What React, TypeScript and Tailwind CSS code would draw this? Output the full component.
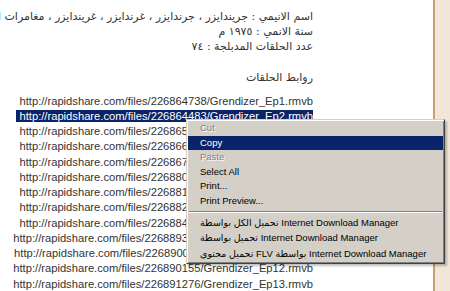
import React from 'react';

const links = [
  'http://rapidshare.com/files/226864738/Grendizer_Ep1.rmvb',
  'http://rapidshare.com/files/226864483/Grendizer_Ep2.rmvb',
  'http://rapidshare.com/files/226865120/Grendizer_Ep3.rmvb',
  'http://rapidshare.com/files/226866401/Grendizer_Ep4.rmvb',
  'http://rapidshare.com/files/226867733/Grendizer_Ep5.rmvb',
  'http://rapidshare.com/files/226880214/Grendizer_Ep6.rmvb',
  'http://rapidshare.com/files/226881502/Grendizer_Ep7.rmvb',
  'http://rapidshare.com/files/226882836/Grendizer_Ep8.rmvb',
  'http://rapidshare.com/files/226884097/Grendizer_Ep9.rmvb',
  'http://rapidshare.com/files/226889342/Grendizer_Ep10.rmvb',
  'http://rapidshare.com/files/226890021/Grendizer_Ep11.rmvb',
  'http://rapidshare.com/files/226890155/Grendizer_Ep12.rmvb',
  'http://rapidshare.com/files/226891276/Grendizer_Ep13.rmvb',
];

type Item = { label: string; disabled?: boolean; active?: boolean; tall?: boolean } | 'sep';

const menu: Item[] = [
  { label: 'Cut', disabled: true },
  { label: 'Copy', active: true },
  { label: 'Paste', disabled: true },
  { label: 'Select All' },
  { label: 'Print...' },
  { label: 'Print Preview...' },
  'sep',
  { label: 'تحميل الكل بواسطة Internet Download Manager', tall: true },
  { label: 'تحميل بواسطة Internet Download Manager', tall: true },
  { label: 'تحميل محتوى FLV بواسطة Internet Download Manager', tall: true },
];

function ContextMenu() {
  return (
    <div className="absolute left-[186px] top-[119px] w-[259px] bg-[#d4d0c8] border border-t-[#d4d0c8] border-l-[#d4d0c8] border-r-[#404040] border-b-[#404040] p-[1px] shadow-[inset_1px_1px_0_#fff,inset_-1px_-1px_0_#808080,2px_2px_2px_rgba(0,0,0,0.25)] font-['Liberation_Sans','DejaVu_Sans',sans-serif] text-[9.5px] text-black">
      {menu.map((item, i) =>
        item === 'sep' ? (
          <div key={i} className="h-[7px] flex items-center px-[1px]">
            <div className="w-full border-t border-b border-t-[#808080] border-b-white" />
          </div>
        ) : (
          <div
            key={i}
            className={
              (item.tall ? 'h-[15.5px] ' : 'h-[14.5px] ') +
              'flex items-center pl-[12px] whitespace-nowrap ' +
              (item.active
                ? 'bg-[#0a246a] text-white'
                : item.disabled
                  ? 'text-[#808080] [text-shadow:1px_1px_0_#fff]'
                  : '')
            }
          >
            {item.label}
          </div>
        )
      )}
    </div>
  );
}

export default function App() {
  return (
    <div className="relative w-[450px] h-[291px] overflow-hidden bg-white flex">
      <div className="w-[433px] shrink-0 bg-white">
        <div
          dir="rtl"
          className="w-[313px] pt-[8.5px] whitespace-nowrap text-right text-[#333] font-['DejaVu_Sans',sans-serif] text-[11px] leading-[15px]"
        >
          <div>اسم الانيمي : جريندايزر ، جرندايزر ، غرندايزر ، غريندايزر ، مغامرات الفضاء</div>
          <div>سنة الانمي : ١٩٧٥ م</div>
          <div>عدد الحلقات المدبلجة : ٧٤</div>
          <div className="mt-[16px]">روابط الحلقات</div>
        </div>
        <div className="w-[313px] mt-[9px] text-right whitespace-nowrap text-[#333] font-['Liberation_Sans','DejaVu_Sans',sans-serif] text-[11.2px] leading-[15.25px]">
          {links.map((l, i) => (
            <div key={l}>
              {i === 1 ? (
                <span className="bg-[#0a246a] text-white pl-[3px]">{l}</span>
              ) : (
                l
              )}
            </div>
          ))}
        </div>
      </div>
      <div className="flex-1 border-l-2 border-[#d39c68] bg-[#f1e6d8]" />
      <ContextMenu />
    </div>
  );
}
